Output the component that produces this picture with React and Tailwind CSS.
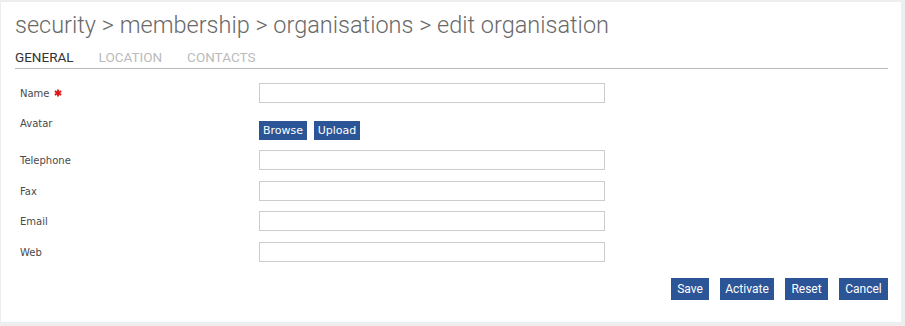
import React from 'react';

const roboto = { fontFamily: 'Roboto, "Liberation Sans", sans-serif' };

const Field = ({ label, required, className = '' }) => (
    <div className={`flex items-start ${className}`}>
        <div className="w-[244px] pt-[4px] pl-[5px] text-[10px] leading-[14px] text-[#4a4a4a] [font-family:'DejaVu_Sans',sans-serif] flex items-center gap-[4px]">
            {label}
            {required && (
                <svg width="8" height="8" viewBox="0 0 10 10" className="mb-[2px]">
                    <g stroke="#e01b1b" strokeWidth="2.4" strokeLinecap="butt">
                        <line x1="5" y1="0.5" x2="5" y2="9.5" />
                        <line x1="1" y1="2.7" x2="9" y2="7.3" />
                        <line x1="1" y1="7.3" x2="9" y2="2.7" />
                    </g>
                </svg>
            )}
        </div>
        <input type="text" className="w-[346px] h-[20px] border border-[#cccccc] bg-white outline-none" />
    </div>
);

const BlueButton = ({ children, className = '' }) => (
    <button className={`bg-[#2c5597] text-white leading-none ${className}`}>{children}</button>
);

const App = () => {
    return (
        <div className="w-[905px] h-[326px] bg-[#eeeeee] pt-[2px] pl-[1px]">
            <div className="w-[900px] h-[320px] bg-white pl-[14px] pr-[13px] flex flex-col">
                <h1 className="text-[23.5px] font-light text-[#6a6a6a] leading-[28px] pt-[9px]" style={{ fontFamily: '"Roboto Light", Roboto, "Liberation Sans", sans-serif' }}>
                    security &gt; membership &gt; organisations &gt; edit organisation
                </h1>

                <div className="flex gap-[25px] mt-[11px] pb-[3px] border-b border-[#bbbbbb] text-[13.5px] leading-[15px] uppercase" style={roboto}>
                    <span className="text-[#333]">General</span>
                    <span className="text-[#bbbbbb]">Location</span>
                    <span className="text-[#bbbbbb]">Contacts</span>
                </div>

                <div className="flex flex-col mt-[14px]">
                    <Field label="Name" required />

                    <div className="flex items-start mt-[10px]">
                        <div className="w-[244px] pt-[4px] pl-[5px] text-[10px] leading-[14px] text-[#4a4a4a] [font-family:'DejaVu_Sans',sans-serif]">
                            Avatar
                        </div>
                        <div className="flex gap-[7px] mt-[8px]">
                            <BlueButton className="w-[48px] h-[19px] text-[11px] [font-family:'DejaVu_Sans',sans-serif]">Browse</BlueButton>
                            <BlueButton className="w-[46px] h-[19px] text-[11px] [font-family:'DejaVu_Sans',sans-serif]">Upload</BlueButton>
                        </div>
                    </div>

                    <Field label="Telephone" className="mt-[10px]" />
                    <Field label="Fax" className="mt-[11px]" />
                    <Field label="Email" className="mt-[10px]" />
                    <Field label="Web" className="mt-[11px]" />
                </div>

                <div className="flex justify-end gap-[11px] mt-[16px] text-[12px]" style={roboto}>
                    <BlueButton className="w-[38px] h-[22px]">Save</BlueButton>
                    <BlueButton className="w-[54px] h-[22px]">Activate</BlueButton>
                    <BlueButton className="w-[43px] h-[22px]">Reset</BlueButton>
                    <BlueButton className="w-[49px] h-[22px]">Cancel</BlueButton>
                </div>
            </div>
        </div>
    );
};

export default App;
